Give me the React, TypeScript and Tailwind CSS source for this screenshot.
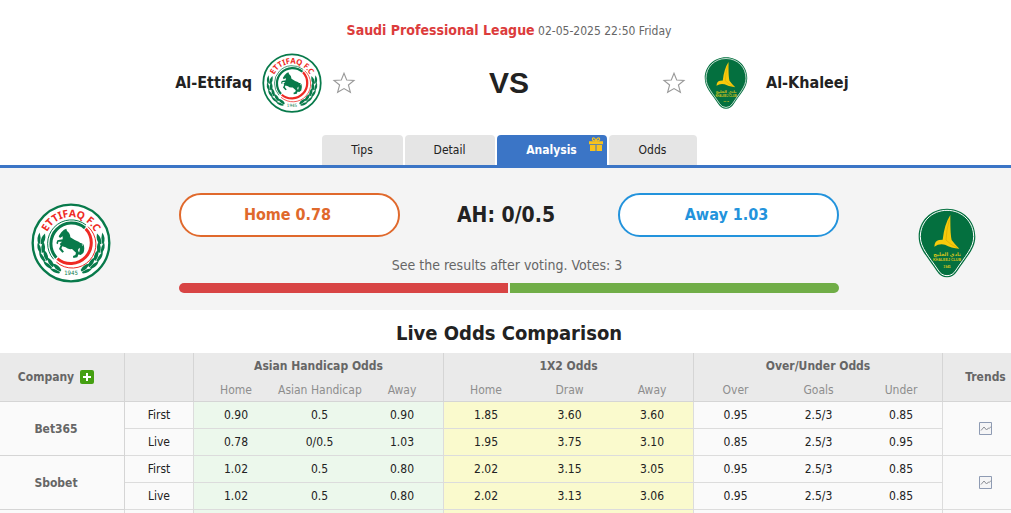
import type { ReactNode } from "react";

function EttifaqCrest({ className }: { className: string }) {
  const leaves = [0, 1, 2, 3, 4];
  return (
    <svg viewBox="0 0 240 240" className={className} role="img" aria-label="Al-Ettifaq crest">
      <defs>
        <path id="crest-arc" d="M46 92 A80 80 0 0 1 194 92" />
      </defs>
      <circle cx="120" cy="120" r="115" fill="#fff" stroke="#087a4b" strokeWidth="7" />
      <text
        fill="#ee2a24"
        fontSize="31"
        fontWeight="700"
        fontFamily="Noto Sans, sans-serif"
        textAnchor="middle"
      >
        <textPath href="#crest-arc" startOffset="50%">
          ETTIFAQ F.C
        </textPath>
      </text>
      <g fill="none">
        <path d="M76 164 A62 62 0 0 1 162 75" stroke="#087a4b" strokeWidth="9" />
        <path d="M164 77 A62 62 0 0 1 79 167" stroke="#ee2a24" strokeWidth="9" />
        <path d="M68 169 A71 71 0 0 1 165 66" stroke="#087a4b" strokeWidth="3" />
        <path d="M171 71 A71 71 0 0 1 76 177" stroke="#ee2a24" strokeWidth="3" />
      </g>
      {[false, true].map((flip) => (
        <g key={String(flip)} transform={flip ? "translate(240 0) scale(-1 1)" : undefined} fill="#087a4b">
          {leaves.map((n) => (
            <g key={n} transform={`rotate(${11 - n * 17} 120 120)`}>
              <path d="M24 140 Q14 124 22 107 Q30 122 29 140Z" />
              <path d="M31 140 Q26 122 38 107 Q46 126 36 140Z" />
            </g>
          ))}
        </g>
      ))}
      <path
        fill="#087a4b"
        d="M106 77 L108 84 Q118 91 118 103 Q132 113 143 116 Q153 121 155 130 Q157 122 152 124 L146 121 Q151 118 158 125 Q162 138 157 150 L149 156 L140 154 Q148 147 146 134 Q141 137 141 142 L144 149 L139 163 L127 165 L126 159 L133 156 L135 149 L123 138 Q110 140 104 133 L94 130 L91 136 L99 146 L94 149 L84 138 L89 127 L86 123 L93 116 L82 116 L81 124 L76 121 L79 112 L95 109 L95 100 L87 105 L83 100 L91 88 L99 80Z"
      />
      <text
        x="120"
        y="217"
        fill="#087a4b"
        fontSize="18"
        fontFamily="DejaVu Sans Condensed, sans-serif"
        textAnchor="middle"
      >
        1945
      </text>
    </svg>
  );
}

function KhaleejCrest({ className }: { className: string }) {
  return (
    <svg viewBox="0 0 240 240" className={className} role="img" aria-label="Al-Khaleej crest">
      <g fill="#04703f">
        <path d="M120 17 C169 17 205 54 205 101 C205 138 178 162 151 204 Q139 223 120 223 Q101 223 89 204 C62 162 35 138 35 101 C35 54 71 17 120 17Z" />
        <path
          d="M120 22 C166 22 200 57 200 101 C200 135 174 160 147 201 Q137 218 120 218 Q103 218 93 201 C66 160 40 135 40 101 C40 57 74 22 120 22Z"
          stroke="#fff"
          strokeWidth="3"
        />
      </g>
      <path
        fill="#f8ca0c"
        d="M130 36 C130 66 130 94 134 111 Q144 125 157 137 Q132 135 114 125 Q96 121 82 131 Q83 113 96 111 L107 110 Q112 64 130 36Z"
      />
      <path fill="none" stroke="#d9a900" strokeWidth="2" d="M127 50 Q118 82 117 111 Q130 125 150 134" />
      <g fill="#d5c31c" fontWeight="700" textAnchor="middle">
        <text x="120" y="159" fontSize="15" fontFamily="DejaVu Sans, sans-serif">
          نادي الخليج
        </text>
        <text x="120" y="175" fontSize="11" fontFamily="Liberation Sans, sans-serif">
          KHALEEJ CLUB
        </text>
        <text x="120" y="194" fontSize="10" fontFamily="Liberation Sans, sans-serif">
          1945
        </text>
      </g>
    </svg>
  );
}

function FavouriteButton({ team }: { team: string }) {
  return (
    <button type="button" aria-label={`Follow ${team}`} className="mx-2.5 block">
      <svg viewBox="0 0 24 24" className="size-6" fill="#fff" stroke="#999" strokeWidth="1.1">
        <path d="M12 2.3 L14.7 9 L22 9.4 L16.4 14 L18.4 21.3 L12 17.6 L5.6 21.3 L7.6 14 L2 9.4 L9.3 9Z" />
      </svg>
    </button>
  );
}

function GiftIcon() {
  return (
    <svg viewBox="0 0 14 14" className="absolute top-0.5 right-1 size-3.5" fill="#f8c21c" aria-hidden="true">
      <path
        d="M7 4 Q3.4 4.2 3.4 2.1 Q3.6 .4 5.1 1 Q6.4 1.7 7 4 Q7.6 1.7 8.9 1 Q10.4 .4 10.6 2.1 Q10.6 4.2 7 4Z"
        fill="none"
        stroke="#f8c21c"
        strokeWidth="1.2"
      />
      <path d="M0 4.2h14v3H0zM1 8h5.5v6H1zM7.5 8H13v6H7.5z" />
    </svg>
  );
}

function TrendIcon() {
  return (
    <svg viewBox="0 0 14 14" className="size-3.5" fill="none" aria-hidden="true">
      <path d="M.5 .5h12v12H.5z" fill="#f5f5f6" stroke="#8e9bb3" />
      <path d="M2 8.5l3-3.5 2.6 3L9.4 6l.8 .6L12 4.5" stroke="#8c8f96" />
    </svg>
  );
}

const tabs = [
  { label: "Tips", width: "w-[81px]" },
  { label: "Detail", width: "w-[90px]" },
  { label: "Analysis", width: "w-[110px]", active: true },
  { label: "Odds", width: "w-[88px]" },
];

const groups = [
  { title: "Asian Handicap Odds", cols: ["Home", "Asian Handicap", "Away"] },
  { title: "1X2 Odds", cols: ["Home", "Draw", "Away"] },
  { title: "Over/Under Odds", cols: ["Over", "Goals", "Under"] },
];

const companies = [
  {
    name: "Bet365",
    rows: [
      ["First", "0.90", "0.5", "0.90", "1.85", "3.60", "3.60", "0.95", "2.5/3", "0.85"],
      ["Live", "0.78", "0/0.5", "1.03", "1.95", "3.75", "3.10", "0.85", "2.5/3", "0.95"],
    ],
  },
  {
    name: "Sbobet",
    rows: [
      ["First", "1.02", "0.5", "0.80", "2.02", "3.15", "3.05", "0.95", "2.5/3", "0.85"],
      ["Live", "1.02", "0.5", "0.80", "2.02", "3.13", "3.06", "0.95", "2.5/3", "0.85"],
    ],
  },
];

function cellStyle(i: number) {
  if (i === 0) return "border-r";
  if (i <= 3) return i === 3 ? "border-r bg-[#ecf8ec]" : "bg-[#ecf8ec]";
  if (i <= 6) return i === 6 ? "border-r bg-[#fafacd]" : "bg-[#fafacd]";
  return i === 9 ? "border-r" : "";
}

function VoteButton({ className, children }: { className: string; children: ReactNode }) {
  return (
    <button
      type="button"
      className={`h-11 w-[221px] rounded-full border-2 bg-white pr-1 text-base font-bold ${className}`}
    >
      {children}
    </button>
  );
}

export default function App() {
  return (
    <div className="overflow-hidden bg-white font-['DejaVu_Sans_Condensed','Noto_Sans',sans-serif] text-xs text-[#222]">
      <div className="min-w-[1018px]">
        <header>
          <p className="pt-5 text-center leading-5 text-[#666]">
            <a href="#league" className="text-sm leading-5 font-bold text-[#dc3c3c]">
              Saudi Professional League
            </a>{" "}
            02-05-2025 22:50 Friday
          </p>
          <div className="mt-3 flex h-[60px] items-center justify-center">
            <div className="flex flex-1 items-center justify-end">
              <span className="mr-2.5 text-base font-bold">Al-Ettifaq</span>
              <EttifaqCrest className="size-[60px]" />
              <FavouriteButton team="Al-Ettifaq" />
            </div>
            <span className="w-[286px] text-center font-['Liberation_Sans',sans-serif] text-3xl font-bold">VS</span>
            <div className="flex flex-1 items-center">
              <FavouriteButton team="Al-Khaleej" />
              <KhaleejCrest className="size-[60px]" />
              <span className="ml-2.5 text-base font-bold">Al-Khaleej</span>
            </div>
          </div>
          <nav className="mt-[22px] flex justify-center gap-0.5 border-b-3 border-[#3b75c6]">
            {tabs.map((t) => (
              <a
                key={t.label}
                href={`#${t.label.toLowerCase()}`}
                className={`relative h-[30px] rounded-t-sm text-center leading-[30px] ${t.width} ${
                  t.active ? "bg-[#3b75c6] font-bold text-white" : "bg-[#e5e5e5]"
                }`}
              >
                {t.label}
                {t.active && <GiftIcon />}
              </a>
            ))}
          </nav>
        </header>

        <section className="flex h-[142px] items-center justify-center gap-[68px] bg-[#f4f4f4]">
          <EttifaqCrest className="mt-2 size-20" />
          <div className="w-[660px]">
            <div className="flex items-center justify-between">
              <VoteButton className="border-[#e0692c] text-[#e0692c]">Home 0.78</VoteButton>
              <strong className="pr-1.5 text-[21px] leading-7">AH: 0/0.5</strong>
              <VoteButton className="border-[#2393dc] text-[#2393dc]">Away 1.03</VoteButton>
            </div>
            <p className="mt-[18px] pr-1 text-center text-sm text-[#666]">See the results after voting. Votes: 3</p>
            <div className="mt-2 mb-[-8px] flex h-2.5 gap-0.5">
              <div className="flex-1 rounded-l-full bg-[#d84444]" />
              <div className="flex-1 rounded-r-full bg-[#70ad47]" />
            </div>
          </div>
          <KhaleejCrest className="mt-2 size-20" />
        </section>

        <h2 className="pt-2.5 pb-1.5 text-center text-xl leading-[27px] font-bold">Live Odds Comparison</h2>

        <table className="w-full table-fixed border-separate border-spacing-0 bg-[#fafafa] text-center [&_td]:border-[#dcdcdc] [&_td]:p-0 [&_th]:border-[#d5d5d5] [&_th]:p-0">
          <colgroup>
            <col className="w-[125px]" />
            <col className="w-[69px]" />
            <col className="w-[84px]" />
            <col className="w-[83px]" />
            <col className="w-[83px]" />
            <col className="w-[84px]" />
            <col className="w-[83px]" />
            <col className="w-[83px]" />
            <col className="w-[83px]" />
            <col className="w-[83px]" />
            <col className="w-[83px]" />
            <col />
          </colgroup>
          <thead className="bg-[#eaeaea] text-[#666]">
            <tr className="h-[25px]">
              <th rowSpan={2} className="border-r border-b">
                <div className="flex items-center justify-center gap-1.5 pr-3">
                  Company
                  <button type="button" aria-label="Add company" className="rounded-xs bg-[#45a012]">
                    <svg viewBox="0 0 14 14" className="size-3.5" stroke="#fff" strokeWidth="2">
                      <path d="M3 7h8M7 3v8" />
                    </svg>
                  </button>
                </div>
              </th>
              <th rowSpan={2} className="border-r border-b" />
              {groups.map((g) => (
                <th key={g.title} colSpan={3} className="border-r">
                  {g.title}
                </th>
              ))}
              <th rowSpan={2} className="border-b">
                <div className="pl-2.5">Trends</div>
              </th>
            </tr>
            <tr className="h-6 text-[#8e8e8e]">
              {groups.flatMap((g) =>
                g.cols.map((c, i) => (
                  <th key={g.title + c} className={`border-b font-normal whitespace-nowrap ${i === 2 ? "border-r" : ""}`}>
                    {c}
                  </th>
                )),
              )}
            </tr>
          </thead>
          <tbody>
            {companies.map((c) =>
              c.rows.map((row, r) => (
                <tr key={c.name + row[0]} className="h-[27px]">
                  {r === 0 && (
                    <th rowSpan={2} className="border-r border-b text-[#666]">
                      <div className="pr-3">{c.name}</div>
                    </th>
                  )}
                  {row.map((v, i) => (
                    <td key={i} className={`border-b ${cellStyle(i)}`}>
                      {v}
                    </td>
                  ))}
                  {r === 0 && (
                    <td rowSpan={2} className="border-b">
                      <a href={`#trend-${c.name}`} aria-label={`${c.name} trend`} className="flex justify-center pl-2.5">
                        <TrendIcon />
                      </a>
                    </td>
                  )}
                </tr>
              )),
            )}
            <tr className="h-[3px]">
              <td className="border-r" />
              {companies[0].rows[0].map((_, i) => (
                <td key={i} className={cellStyle(i)} />
              ))}
              <td />
            </tr>
          </tbody>
        </table>
      </div>
    </div>
  );
}
